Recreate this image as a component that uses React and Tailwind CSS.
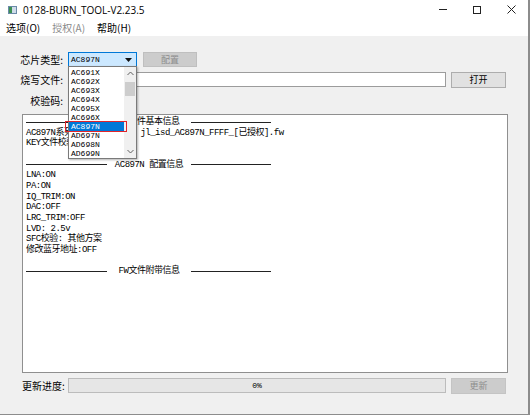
import React from "react";

const chips = ["AC691X", "AC692X", "AC693X", "AC694X", "AC695X", "AC696X", "AC897N", "AD697N", "AD698N", "AD699N"];

const mono = { fontFamily: '"Liberation Mono", "Noto Sans CJK SC", monospace' };

function Divider({ text }) {
  return (
    <div className="flex items-center h-[10.67px] w-[245px]">
      <div className="w-[81px] h-px bg-[#222]" />
      <div className="w-[84px] text-center whitespace-nowrap">{text}</div>
      <div className="w-[80px] h-px bg-[#222]" />
    </div>
  );
}

function Chevron({ up }) {
  return (
    <svg width="7" height="5" viewBox="0 0 7 5">
      <path d={up ? "M0.5 4 L3.5 1 L6.5 4" : "M0.5 1 L3.5 4 L6.5 1"} fill="none" stroke="#606060" strokeWidth="1" />
    </svg>
  );
}

export default function App() {
  return (
    <div className="w-[531px] h-[416px] bg-white overflow-hidden" style={{ fontFamily: '"Noto Sans CJK SC", "Noto Sans", sans-serif' }}>
      <div className="relative w-[530px] h-[415px] border-r-2 border-b border-[#8c8c8c] flex flex-col bg-[#f0f0f0]">
        {/* title bar */}
        <div className="h-[19px] bg-white flex items-center pl-[8px] text-[10px] text-black">
          <div className="w-[9px] h-[8px] border border-[#6a8aa8] bg-[#cfdcea] flex">
            <div className="w-[3px] h-full bg-[#3d8f54]" />
          </div>
          <span className="ml-[6px] mt-[1px]" style={{ fontFamily: '"Open Sans", sans-serif' }}>0128-BURN_TOOL-V2.23.5</span>
          <div className="ml-auto flex items-center h-full">
            <div className="w-[34px] flex justify-center"><div className="w-[8px] h-px bg-[#222]" /></div>
            <div className="w-[34px] flex justify-center"><div className="w-[8px] h-[8px] border border-[#222]" /></div>
            <div className="w-[34px] flex justify-center">
              <svg width="9" height="9" viewBox="0 0 9 9"><path d="M0.5 0.5 L8.5 8.5 M8.5 0.5 L0.5 8.5" stroke="#222" strokeWidth="1" /></svg>
            </div>
          </div>
        </div>
        {/* menu bar */}
        <div className="h-[17px] bg-white flex items-center pl-[6px] gap-[12px] text-[10px]">
          <span className="text-black">选项(O)</span>
          <span className="text-[#8a8a8a]">授权(A)</span>
          <span className="text-black">帮助(H)</span>
        </div>

        {/* body */}
        <div className="flex-1 flex flex-col pt-[16px] pl-[20px] text-[10px] text-black">
          <div className="flex items-center h-[15px]">
            <div className="w-[43px] text-right whitespace-nowrap">芯片类型:</div>
            <div className="ml-[5px] w-[69px] h-[15px] border border-[#0078d7] bg-[#cce8ff] flex items-center pl-[2px] text-[8px]" style={mono}>
              AC897N
              <svg className="ml-auto mr-[4px]" width="7" height="4" viewBox="0 0 7 4"><path d="M0 0 L7 0 L3.5 4 Z" fill="#111" /></svg>
            </div>
            <div className="ml-[6px] w-[54px] h-[15px] bg-[#cccccc] border border-[#bfbfbf] flex items-center justify-center text-[#8d8d8d] text-[9px]">配置</div>
          </div>
          <div className="flex items-center h-[15px] mt-[5px]">
            <div className="w-[43px] text-right whitespace-nowrap">烧写文件:</div>
            <div className="ml-[5px] w-[378px] h-[15px] border border-[#9c9c9c] bg-white" />
            <div className="ml-[5px] w-[55px] h-[16px] bg-[#e1e1e1] border border-[#adadad] flex items-center justify-center text-[9px]">打开</div>
          </div>
          <div className="flex items-center h-[15px] mt-[6px]">
            <div className="w-[43px] text-right whitespace-nowrap">校验码:</div>
          </div>

          <div className="mt-[6px] ml-[2px] w-[486px] h-[259px] border border-[#8f8f8f] bg-white pt-[2px] pl-[3px] text-[9px] leading-[10.67px] tracking-[-0.5px]" style={mono}>
            <Divider text="FW文件基本信息" />
            <div className="whitespace-nowrap">AC897N系列芯片，固件名称：jl_isd_AC897N_FFFF_[已授权].fw</div>
            <div className="whitespace-nowrap">KEY文件校验：通过</div>
            <div className="h-[10.67px]" />
            <Divider text="AC897N 配置信息" />
            <div>LNA:ON</div>
            <div>PA:ON</div>
            <div>IQ_TRIM:ON</div>
            <div>DAC:OFF</div>
            <div>LRC_TRIM:OFF</div>
            <div>LVD: 2.5v</div>
            <div>SFC校验: 其他方案</div>
            <div>修改蓝牙地址:OFF</div>
            <div className="h-[10.67px]" />
            <Divider text="FW文件附带信息" />
          </div>

          <div className="flex items-center h-[15px] mt-[5px]">
            <div className="ml-[2px] w-[41px] whitespace-nowrap">更新进度:</div>
            <div className="ml-[5px] w-[378px] h-[15px] border border-[#bcbcbc] bg-[#e6e6e6] flex items-center justify-center text-[8px]" style={mono}>0%</div>
            <div className="ml-[5px] w-[55px] h-[16px] bg-[#cccccc] border border-[#c4c4c4] flex items-center justify-center text-[#8d8d8d] text-[9px]">更新</div>
          </div>
        </div>

        {/* open combo list */}
        <div className="absolute left-[68px] top-[66px] w-[69px] h-[93px] bg-white border border-[#7a7a7a] shadow-[1px_1px_2px_rgba(0,0,0,0.3)] flex">
          <div className="flex-1 pt-[1px] text-[8px] leading-[9px]" style={mono}>
            {chips.map((c) => (
              <div key={c} className={c === "AC897N" ? "relative bg-[#0078d7] text-white pl-[2px]" : "pl-[2px]"}>
                {c}
                {c === "AC897N" && (
                  <div className="absolute left-[-4px] right-[-3px] top-[-1px] bottom-[-1px] border-[1.5px] border-[#e0252b]" />
                )}
              </div>
            ))}
          </div>
          <div className="w-[12px] bg-[#f0f0f0] flex flex-col items-center pt-[4px]">
            <Chevron up />
            <div className="mt-[6px] w-[10px] h-[14px] bg-[#cdcdcd]" />
            <div className="mt-auto mb-[4px]"><Chevron /></div>
          </div>
        </div>
      </div>
    </div>
  );
}
